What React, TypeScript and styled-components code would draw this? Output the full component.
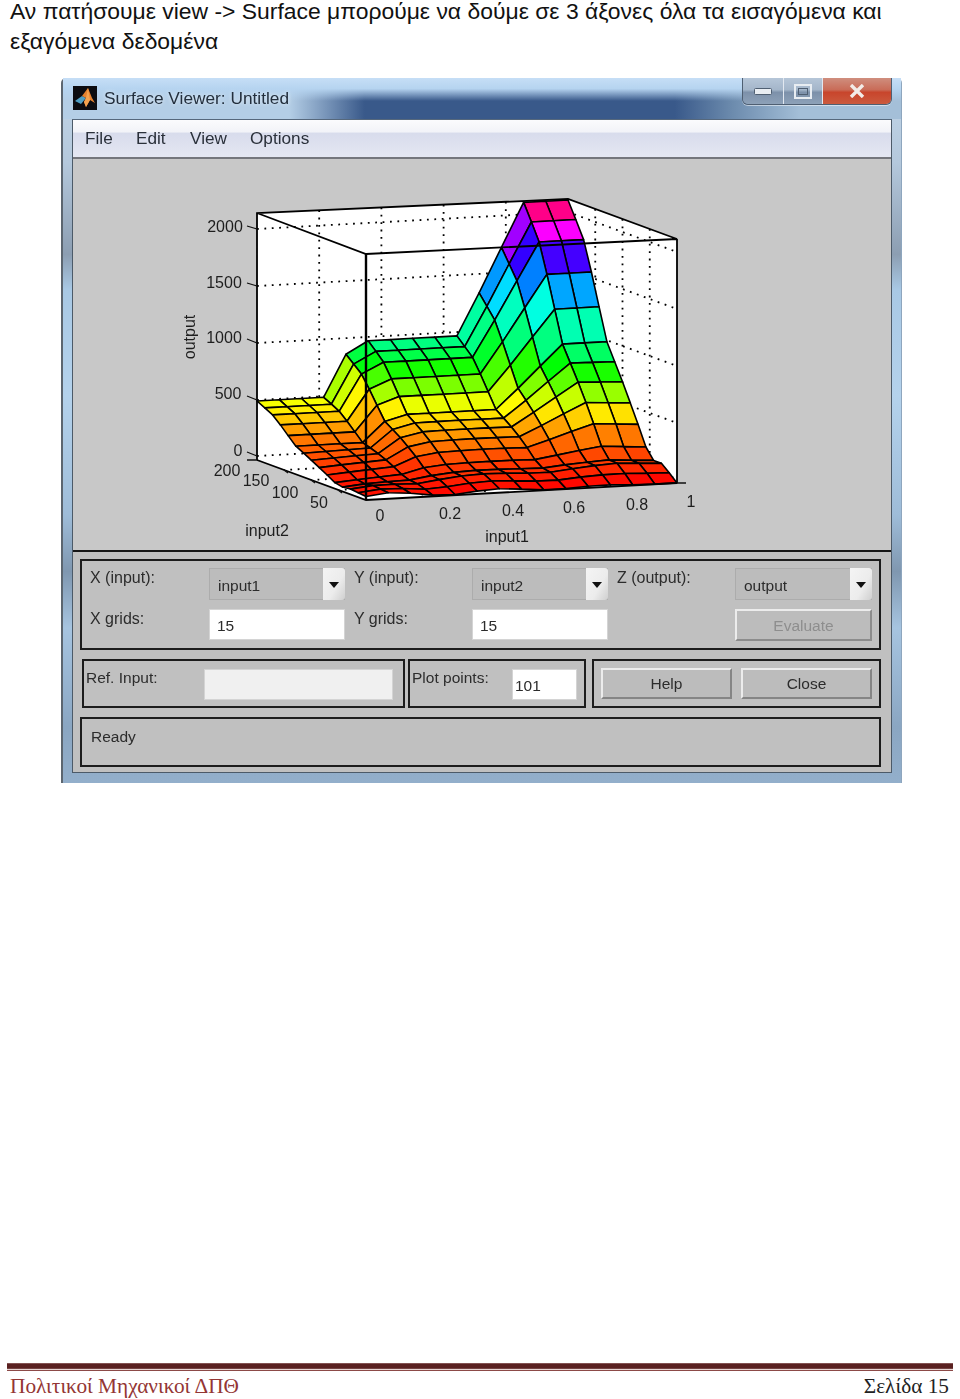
import React from "react";
import styled, { createGlobalStyle } from "styled-components";

const Global = createGlobalStyle`
  html, body { margin: 0; padding: 0; background: #fff; overflow: hidden; }
  * { box-sizing: border-box; }
`;

const Page = styled.div`
  width: 960px;
  height: 1399px;
  display: flex;
  flex-direction: column;
  font-family: "Liberation Sans", Arial, sans-serif;
`;

const Heading = styled.p`
  margin: -4px 0 0 10px;
  width: 900px;
  font-size: 22.9px;
  line-height: 30px;
  color: #111;
`;

const Window = styled.div`
  width: 841px;
  height: 705px;
  margin: 22px 0 0 61px;
  padding: 0 9px 10px 9px;
  display: flex;
  flex-direction: column;
  border-left: 2px solid #5c6670;
  border-top-left-radius: 5px;
  border-top-right-radius: 5px;
  border-right: 1px solid #8ea6be;
  filter: blur(0.45px);
  background: linear-gradient(
    to bottom,
    #c2d6e8 0,
    #b4c8dc 12%,
    #8c9eb2 25%,
    #a8c8e4 30%,
    #b4d2ec 45%,
    #9ebcd8 62%,
    #7f97b0 70%,
    #a6c4e0 78%,
    #8aa6c2 92%,
    #93afcb 100%
  );
`;

const TitleBar = styled.div`
  height: 41px;
  margin: 0 -9px;
  padding: 8px 9px 0 10px;
  display: flex;
  align-items: flex-start;
  background:
    linear-gradient(to bottom, #c6def6 0, #b6d4f0 26%, rgba(180, 212, 240, 0) 56%),
    linear-gradient(to right, #b4cee6 0, #b4cee6 27%, #39598a 36%, #39598a 73%, #6d8cae 80%, #a4bfd8 88%);
`;

const AppIcon = styled.svg`
  width: 24px;
  height: 24px;
  flex: none;
`;

const Title = styled.span`
  margin: 2px 0 0 7px;
  font-size: 17.3px;
  line-height: 20px;
  color: #232f3d;
  text-shadow: 0 0 4px rgba(255, 255, 255, 0.7);
`;

const Controls = styled.div`
  margin: -8px 0 0 auto;
  width: 150px;
  height: 27px;
  display: flex;
  border: 1px solid #4f5f72;
  border-top: none;
  border-radius: 0 0 6px 6px;
  overflow: hidden;
  box-shadow: 0 1px 0 rgba(255, 255, 255, 0.5);
`;

const ControlButton = styled.div<{ $w: number; $close?: boolean }>`
  width: ${(p) => p.$w}px;
  display: flex;
  align-items: center;
  justify-content: center;
  border-right: ${(p) => (p.$close ? "none" : "1px solid #e2e8f0")};
  background: ${(p) =>
    p.$close
      ? "linear-gradient(to bottom, #cf8e7e 0, #c96c58 45%, #c8452c 55%, #cb5a3e 100%)"
      : "linear-gradient(to bottom, #b6c6d8 0, #a4b6ca 45%, #7d91aa 55%, #8da1b8 100%)"};
`;

const Client = styled.div`
  flex: 1;
  display: flex;
  flex-direction: column;
  border: 1px solid #4c5a68;
  border-top-color: #56687c;
`;

const MenuBar = styled.div`
  height: 39px;
  flex: none;
  padding-left: 12px;
  display: flex;
  align-items: center;
  font-size: 17.2px;
  color: #2a303a;
  border-bottom: 2px solid #74767c;
  background: linear-gradient(to bottom, #fbfbfd 0, #f2f3f8 32%, #d8dcec 36%, #e4e7f2 100%);
`;

const MenuItem = styled.span<{ $w: number }>`
  width: ${(p) => p.$w}px;
`;

const PlotArea = styled.div`
  height: 391px;
  flex: none;
  background: #c8c8c8;
`;

const PlotSvg = styled.svg`
  display: block;
  width: 100%;
  height: 100%;
`;

const Panel = styled.div`
  flex: 1;
  padding: 7px 10px 0 7px;
  display: flex;
  flex-direction: column;
  gap: 9px;
  background: #c0c0c0;
  border-top: 2px solid #161616;
  color: #2c2c2c;
  font-size: 16px;
`;

const Frame = styled.div`
  border: 2px solid #1c1c1c;
`;

const AxisFrame = styled(Frame)`
  height: 91px;
  padding: 7px 0 0 8px;
  display: grid;
  grid-template-columns: 119px 136px 127px 136px 127px 137px;
  grid-template-rows: 32px 32px;
  row-gap: 9px;
`;

const Label = styled.span<{ $indent?: number }>`
  line-height: 20px;
  padding-left: ${(p) => p.$indent ?? 0}px;
  white-space: nowrap;
`;

const Select = styled.div`
  height: 32px;
  display: flex;
  align-items: center;
  justify-content: space-between;
  padding-left: 8px;
  background: #bcbcbc;
  border: 1px solid #acacac;
  font-size: 15.5px;
  line-height: 1;
  padding-top: 3px;
  position: relative;
`;

const Arrow = styled.div`
  position: absolute;
  right: -1px;
  top: -1px;
  width: 22px;
  height: 32px;
  display: flex;
  align-items: center;
  justify-content: center;
  border-radius: 0 3px 3px 0;
  background: linear-gradient(120deg, #f4f4f4 0, #ececec 60%, #cfcfcf 100%);
  &::after {
    content: "";
    width: 0;
    height: 0;
    border-left: 5px solid transparent;
    border-right: 5px solid transparent;
    border-top: 6px solid #111;
    margin-top: 2px;
  }
`;

const Field = styled.div<{ $w?: number; $disabled?: boolean; $pad?: number }>`
  height: 31px;
  width: ${(p) => (p.$w ? `${p.$w}px` : "auto")};
  padding: 6px 0 0 ${(p) => p.$pad ?? 7}px;
  font-size: 15.5px;
  line-height: 20px;
  background: ${(p) => (p.$disabled ? "#f0f0f0" : "#fff")};
  border: 1px solid #d4d4d4;
`;

const EvaluateButton = styled.div`
  height: 32px;
  display: flex;
  align-items: center;
  justify-content: center;
  padding-top: 2px;
  font-size: 15.5px;
  color: #8e8e8e;
  background: #bcbcbc;
  border: 2px solid;
  border-color: #ececec #8c8c8c #8c8c8c #ececec;
`;

const MiddleRow = styled.div`
  height: 49px;
  margin-left: 2px;
  display: flex;
`;

const RefFrame = styled(Frame)`
  width: 323px;
  padding: 8px 0 0 2px;
  display: flex;
  align-items: flex-start;
`;

const PlotFrame = styled(Frame)`
  width: 178px;
  margin-left: 3px;
  padding: 8px 0 0 2px;
  display: flex;
  align-items: flex-start;
`;

const ButtonFrame = styled(Frame)`
  width: 289px;
  margin-left: 6px;
  padding: 7px 0 0 7px;
  display: flex;
  gap: 9px;
  align-items: flex-start;
`;

const InlineLabel = styled(Label)<{ $w: number }>`
  width: ${(p) => p.$w}px;
  margin-top: -1px;
  flex: none;
  font-size: 15.5px;
`;

const PushButton = styled.div`
  width: 131px;
  height: 31px;
  display: flex;
  align-items: center;
  justify-content: center;
  padding-top: 1px;
  font-size: 15.5px;
  background: #bcbcbc;
  border: 2px solid;
  border-color: #ececec #858585 #858585 #ececec;
`;

const StatusFrame = styled(Frame)`
  height: 50px;
  padding: 8px 0 0 9px;
  font-size: 15.5px;
  line-height: 20px;
`;

const FooterRule = styled.div`
  margin: auto 7px 0;
  height: 8px;
  background: linear-gradient(
    to bottom,
    #b08a88 0,
    #5a2120 12%,
    #5a2120 68%,
    #e8d4d2 72%,
    #e8d4d2 84%,
    #8c4a48 88%,
    #8c4a48 100%
  );
`;

const Footer = styled.div`
  height: 28px;
  padding: 2px 11px 0 10px;
  display: flex;
  justify-content: space-between;
  font-family: "Liberation Serif", "Times New Roman", serif;
  font-size: 21.3px;
  line-height: 26px;
`;

const FooterLeft = styled.span`
  color: #943634;
`;

const FooterRight = styled.span`
  color: #222;
`;

const AxisText = styled.text`
  font-family: "Liberation Sans", Arial, sans-serif;
  font-size: 16px;
  fill: #1e1e1e;
  text-anchor: middle;
  dominant-baseline: central;
`;

/* ---- surface model: 15 × 15 vertices of a 3-D projected mesh ---- */
const backEdge = [0.24, 0.24, 0.24, 0.24, 0.41, 0.46, 0.46, 0.46, 0.46, 0.46, 0.63, 0.81, 0.988, 0.988, 0.988];
const rightEdge = [0, 0.03, 0.057, 0.057, 0.1, 0.18, 0.256, 0.33, 0.4, 0.47, 0.6, 0.73, 0.85, 0.92, 0.988];

const height = (i: number, j: number) => {
  const base = (backEdge[i] * rightEdge[j]) / 0.988;
  const ripple = j < 4 ? 0.012 * (1 - j / 4) * (1.2 + Math.sin(i * 1.3)) * (1 - i / 15) : 0;
  const swell = j < 9 ? 0.03 * Math.sin((Math.PI * j) / 9) * Math.sin((Math.PI * i) / 14) : 0;
  return base + ripple + swell;
};

const project = (u: number, v: number, z: number): [number, number] => [
  366 + 311 * u - 109 * v,
  500 - 17 * u - 40 * v - 246 * z,
];

const vertex = (i: number, j: number) => project(i / 14, j / 14, height(i, j));

/* hue read off the reference's right-hand column, row by row */
const hueStops: [number, number][] = [
  [0, 0],
  [0.08, 18],
  [0.14, 32],
  [0.218, 58],
  [0.293, 90],
  [0.365, 120],
  [0.435, 150],
  [0.535, 168],
  [0.665, 212],
  [0.79, 270],
  [0.885, 305],
  [0.954, 335],
  [1, 345],
];

const hueOf = (z: number) => {
  for (let k = 1; k < hueStops.length; k++) {
    const [z1, h1] = hueStops[k];
    const [z0, h0] = hueStops[k - 1];
    if (z <= z1) return h0 + ((z - z0) / (z1 - z0)) * (h1 - h0);
  }
  return 345;
};

type Cell = { key: string; points: string; fill: string; order: number };
const cells: Cell[] = [];
for (let i = 0; i < 14; i++) {
  for (let j = 0; j < 14; j++) {
    const corners = [vertex(i, j), vertex(i + 1, j), vertex(i + 1, j + 1), vertex(i, j + 1)];
    const mean = (height(i, j) + height(i + 1, j) + height(i + 1, j + 1) + height(i, j + 1)) / 4;
    const shade = (mean + height(i, j)) / 2;
    cells.push({
      key: `${i}-${j}`,
      points: corners.map((c) => `${c[0].toFixed(1)},${c[1].toFixed(1)}`).join(" "),
      fill: `hsl(${hueOf(shade).toFixed(0)}, 100%, 50%)`,
      order: i + j,
    });
  }
}
cells.sort((a, b) => b.order - a.order);

const ticks = [0.2, 0.4, 0.6, 0.8];
const sideTicks = [0.25, 0.5, 0.75];
const levels = [4, 60, 117, 174, 231];

const Dotted = ({ d }: { d: string }) => (
  <path d={d} fill="none" stroke="#000" strokeWidth={1.8} strokeDasharray="1.8 5.6" />
);

const zLabels: [string, number, number][] = [
  ["2000", 225, 226],
  ["1500", 224, 282],
  ["1000", 224, 337],
  ["500", 228, 393],
  ["0", 238, 450],
];
const yLabels: [string, number, number][] = [
  ["200", 227, 470],
  ["150", 256, 480],
  ["100", 285, 492],
  ["50", 319, 502],
];
const xLabels: [string, number, number][] = [
  ["0", 380, 515],
  ["0.2", 450, 513],
  ["0.4", 513, 510],
  ["0.6", 574, 507],
  ["0.8", 637, 504],
  ["1", 691, 501],
];

const SurfacePlot = () => (
  <PlotSvg viewBox="73 159 818 391">
    <polygon points="257,213 568,199 677,239 677,483 366,500 257,460" fill="#fff" />
    {ticks.map((t) => {
      const x = 257 + 311 * t;
      const top = 213 - 14 * t;
      const bottom = 460 - 17 * t;
      const fx = 366 + 311 * t;
      const fy = 500 - 17 * t;
      return <Dotted key={`u${t}`} d={`M${x} ${top}L${x} ${bottom}L${fx} ${fy}`} />;
    })}
    {sideTicks.map((t) => {
      const x = 568 + 109 * t;
      const top = 199 + 40 * t;
      const bottom = 443 + 40 * t;
      const fx = 257 + 109 * t;
      const fy = 460 + 40 * t;
      return <Dotted key={`v${t}`} d={`M${x} ${top}L${x} ${bottom}L${fx} ${fy}`} />;
    })}
    {levels.map((l) => (
      <Dotted key={`z${l}`} d={`M257 ${460 - l}L568 ${443 - l}L677 ${483 - l}`} />
    ))}
    {cells.map((c) => (
      <polygon key={c.key} points={c.points} fill={c.fill} stroke="#000" strokeWidth={1.6} strokeLinejoin="round" />
    ))}
    <path
      d="M257 460L257 213L568 199L677 239L366 254L257 213M677 239L677 483M257 460L366 500L677 483"
      fill="none"
      stroke="#000"
      strokeWidth={1.8}
    />
    <path d="M366 254L366 500" fill="none" stroke="#000" strokeWidth={2.4} />
    <path
      d="M247 226L257 229M247 283L257 286M247 339L257 343M247 396L257 400M247 452L257 456M247 460L257 460M284 470L288 473M311 480L315 483M338 490L342 493M677 483L686 483"
      fill="none"
      stroke="#111"
      strokeWidth={1.3}
    />
    {[...zLabels, ...yLabels, ...xLabels].map(([t, x, y]) => (
      <AxisText key={`${t}-${x}`} x={x} y={y}>
        {t}
      </AxisText>
    ))}
    <AxisText x={267} y={530}>input2</AxisText>
    <AxisText x={507} y={536}>input1</AxisText>
    <AxisText x={189} y={337} transform="rotate(-90 189 337)">output</AxisText>
  </PlotSvg>
);

const MatlabIcon = () => (
  <AppIcon viewBox="0 0 24 24">
    <rect width="24" height="24" fill="#0c0c10" />
    <path d="M2 15L9 10L13 12L8 18Z" fill="#4f9fc4" />
    <path d="M9 10L15 2L19 12L22 17L17 14L13 21L11 16L13 12Z" fill="#e5812e" />
    <path d="M15 2L13 12L11 16L13 21L17 14Z" fill="#f3a24f" />
  </AppIcon>
);

export default function App() {
  return (
    <Page>
      <Global />
      <Heading>
        Αν πατήσουμε view -&gt; Surface μπορούμε να δούμε σε 3 άξονες όλα τα εισαγόμενα και εξαγόμενα δεδομένα
      </Heading>
      <Window>
        <TitleBar>
          <MatlabIcon />
          <Title>Surface Viewer: Untitled</Title>
          <Controls>
            <ControlButton $w={41}>
              <svg width="18" height="7" viewBox="0 0 18 7">
                <rect x="0.5" y="0.5" width="17" height="6" rx="1" fill="#e8edf2" stroke="#4f5f72" />
              </svg>
            </ControlButton>
            <ControlButton $w={39}>
              <svg width="18" height="15" viewBox="0 0 18 15">
                <rect x="1" y="1" width="16" height="13" fill="none" stroke="#e8edf2" strokeWidth="2" />
                <rect x="4.5" y="4.5" width="9" height="6" fill="none" stroke="#4f5f72" />
              </svg>
            </ControlButton>
            <ControlButton $w={68} $close>
              <svg width="16" height="14" viewBox="0 0 16 14">
                <path d="M2 1L14 13M14 1L2 13" stroke="#f2ece8" strokeWidth="3.4" />
              </svg>
            </ControlButton>
          </Controls>
        </TitleBar>
        <Client>
          <MenuBar>
            <MenuItem $w={51}>File</MenuItem>
            <MenuItem $w={54}>Edit</MenuItem>
            <MenuItem $w={60}>View</MenuItem>
            <MenuItem $w={70}>Options</MenuItem>
          </MenuBar>
          <PlotArea>
            <SurfacePlot />
          </PlotArea>
          <Panel>
            <AxisFrame>
              <Label>X (input):</Label>
              <Select>
                input1
                <Arrow />
              </Select>
              <Label $indent={9}>Y (input):</Label>
              <Select>
                input2
                <Arrow />
              </Select>
              <Label $indent={9}>Z (output):</Label>
              <Select>
                output
                <Arrow />
              </Select>
              <Label>X grids:</Label>
              <Field>15</Field>
              <Label $indent={9}>Y grids:</Label>
              <Field>15</Field>
              <span />
              <EvaluateButton>Evaluate</EvaluateButton>
            </AxisFrame>
            <MiddleRow>
              <RefFrame>
                <InlineLabel $w={118}>Ref. Input:</InlineLabel>
                <Field $w={189} $disabled />
              </RefFrame>
              <PlotFrame>
                <InlineLabel $w={100}>Plot points:</InlineLabel>
                <Field $w={65} $pad={2}>101</Field>
              </PlotFrame>
              <ButtonFrame>
                <PushButton>Help</PushButton>
                <PushButton>Close</PushButton>
              </ButtonFrame>
            </MiddleRow>
            <StatusFrame>Ready</StatusFrame>
          </Panel>
        </Client>
      </Window>
      <FooterRule />
      <Footer>
        <FooterLeft>Πολιτικοί Μηχανικοί ΔΠΘ</FooterLeft>
        <FooterRight>Σελίδα 15</FooterRight>
      </Footer>
    </Page>
  );
}
